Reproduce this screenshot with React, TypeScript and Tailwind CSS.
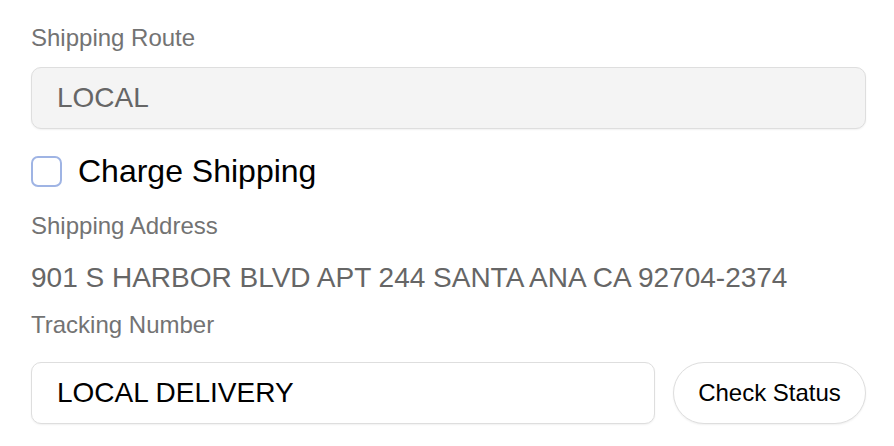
export default function App() {
  return (
    <div
      className="bg-white pl-[31px] pr-[28px] pt-[20px] pb-[20px] text-[#666]"
      style={{ fontFamily: '"Liberation Sans", Arial, sans-serif' }}
    >
      <div className="text-[24px] leading-[36px] text-[#737373]">Shipping Route</div>
      <div className="mt-[11px] flex h-[62px] items-center rounded-[10px] border-[1.5px] border-[#dedede] bg-[#f4f4f4] px-[25px] text-[28px] text-[#666] shadow-[0_1px_2px_rgba(0,0,0,0.06)]">
        LOCAL
      </div>

      <label className="mt-[18px] flex h-[48px] items-center gap-[16px] text-[32px] leading-[48px] text-black">
        <span className="block h-[31px] w-[31px] rounded-[7px] border-2 border-[#9fb4e4] bg-white" />
        Charge Shipping
      </label>

      <div className="mt-[13px] text-[24px] leading-[36px] text-[#737373]">Shipping Address</div>
      <div className="mt-[13px] text-[28px] leading-[42px] text-[#666]">
        901 S HARBOR BLVD APT 244 SANTA ANA CA 92704-2374
      </div>

      <div className="mt-[8px] text-[24px] leading-[36px] text-[#737373]">Tracking Number</div>
      <div className="mt-[19px] flex gap-[18px]">
        <div className="flex h-[62px] flex-1 items-center rounded-[10px] border-[1.5px] border-[#dedede] bg-white px-[25px] text-[28px] text-black shadow-[0_1px_2px_rgba(0,0,0,0.06)]">
          LOCAL DELIVERY
        </div>
        <button className="h-[62px] w-[193px] rounded-full border-[1.5px] border-[#dedede] bg-white text-[24px] text-black shadow-[0_1px_2px_rgba(0,0,0,0.06)]">
          Check Status
        </button>
      </div>
    </div>
  )
}
